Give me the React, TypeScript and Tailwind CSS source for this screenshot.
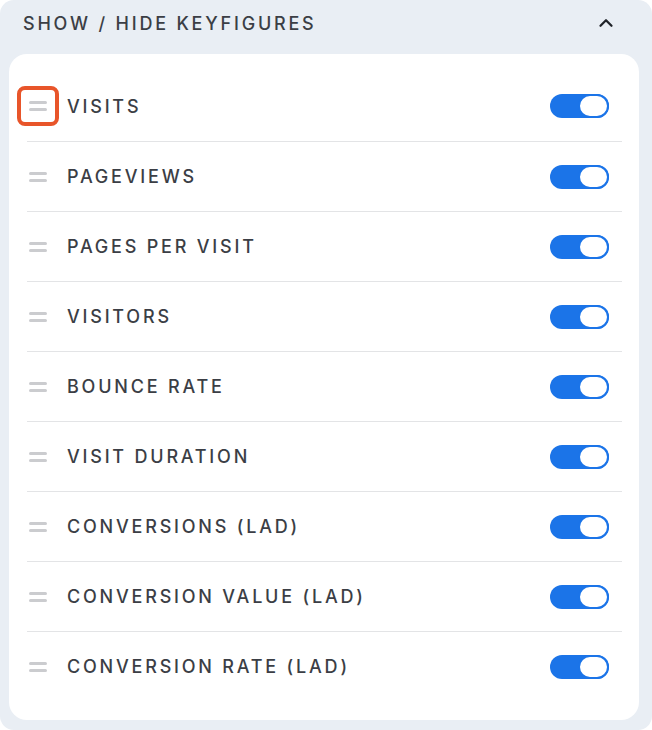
import { ChevronUp } from "lucide-react";

const keyfigures = [
  "Visits",
  "Pageviews",
  "Pages per visit",
  "Visitors",
  "Bounce rate",
  "Visit duration",
  "Conversions (LAD)",
  "Conversion value (LAD)",
  "Conversion rate (LAD)",
];

function Toggle() {
  return (
    <div className="flex h-[24px] w-[59px] items-center justify-end rounded-full bg-[#1b74e8]">
      <div className="h-[24px] w-[31px] rounded-full border-2 border-[#1b74e8] bg-white" />
    </div>
  );
}

function DragHandle({ active }: { active?: boolean }) {
  return (
    <div
      className={
        active
          ? "-ml-[11px] flex h-[40px] w-[42px] items-center justify-center rounded-[8px] border-[4px] border-[#e8552a]"
          : "flex h-[40px] w-[20px] items-center justify-center"
      }
    >
      <div className="flex flex-col gap-[4px]">
        <div className="h-[3px] w-[18px] rounded-full bg-[#cbcccf]" />
        <div className="h-[3px] w-[18px] rounded-full bg-[#cbcccf]" />
      </div>
    </div>
  );
}

export default function App() {
  return (
    <div
      className="h-[730px] w-[652px] rounded-[14px] bg-[#e9eef4] pl-[9px] pr-[13px] pt-[4px]"
      style={{ fontFamily: "Inter, 'Noto Sans', sans-serif" }}
    >
      <div className="flex h-[38px] items-center justify-between pl-[14px] pr-[22px]">
        <h2 className="text-[18px] font-medium uppercase tracking-[0.155em] text-[#3b3e45]">
          Show / Hide keyfigures
        </h2>
        <ChevronUp size={22} strokeWidth={2.5} className="text-[#202329]" />
      </div>
      <div className="mt-[12px] rounded-[18px] bg-white pb-[19px] pl-[18px] pr-[17px] pt-[17px]">
        {keyfigures.map((name, i) => (
          <div
            key={name}
            className={
              "flex h-[70px] items-center pr-[13px]" +
              (i > 0 ? " border-t border-[#e3e4e6]" : "")
            }
          >
            <div className="flex w-[40px] justify-start pl-[1px]">
              <DragHandle active={i === 0} />
            </div>
            <span className="flex-1 text-[18px] font-medium uppercase tracking-[0.155em] text-[#3b3e45]">
              {name}
            </span>
            <Toggle />
          </div>
        ))}
      </div>
    </div>
  );
}
